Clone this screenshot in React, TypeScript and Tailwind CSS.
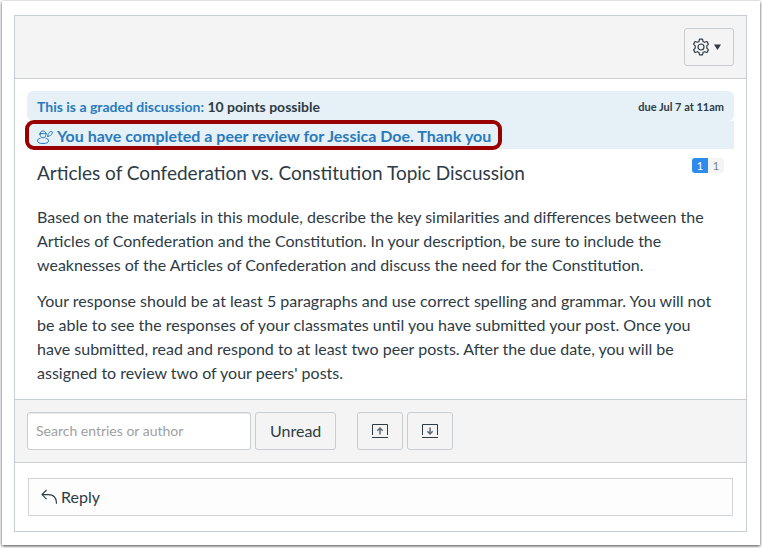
import React from "react";

const GearIcon = () => (
  <svg
    width="18"
    height="18"
    viewBox="0 0 18 18"
    fill="none"
    stroke="#2D3B45"
    strokeWidth="1.2"
    strokeLinejoin="round"
  >
    <path d="M7.500 1.200h3l.5 2.200 1.600.9 2.400-.8 1.400 2.600-1.600 1.700v2.400l1.600 1.700-1.400 2.600-2.400-.8-1.600.9-.5 2.200h-3L7 14.600l-1.600-.9-2.400.8-1.400-2.600 1.600-1.700V7.800L1.600 6.100 3 3.500l2.400.8L7 3.400z" />
    <circle cx="9" cy="9" r="3" />
  </svg>
);

const PeerReviewIcon = () => (
  <svg
    width="16"
    height="16"
    viewBox="0 0 16 16"
    fill="none"
    stroke="#2B7ABC"
    strokeWidth="1"
    strokeLinecap="round"
    strokeLinejoin="round"
  >
    <path d="M3 6.200C3 4.200 4.100 3 6 3s3 1.200 3 3.200-1.200 3.600-3 3.600-3-1.600-3-3.600z" />
    <path d="M2.800 5.600h6.400" />
    <path d="M3.200 10.200C1.500 10.500.5 11.400.5 12.900c0 1.700 2 2.600 5.500 2.600s5.500-.9 5.500-2.600c0-1.500-1-2.400-2.700-2.700" />
    <path d="M10.800 8.600c-.3-1.400.2-2.900 1.300-4 1.100-1.100 2.400-1.500 3-.9s.2 2-.9 3.100c-.9.900-2 1.400-3 1.300z" />
  </svg>
);

const CollapseIcon = () => (
  <svg width="16" height="16" viewBox="0 0 16 16" fill="none" stroke="#2D3B45">
    <path d="M.5 12V1.500h15V12M0 14.500h16" />
    <path d="M8 11.500V5M5.300 7.700L8 5l2.700 2.700" stroke="#5F6A73" strokeWidth="1.500" />
  </svg>
);

const ExpandIcon = () => (
  <svg width="16" height="16" viewBox="0 0 16 16" fill="none" stroke="#2D3B45">
    <path d="M.5 12V1.500h15V12M0 14.500h16" />
    <path d="M8 4.500V11M5.300 8.300L8 11l2.700-2.700" stroke="#5F6A73" strokeWidth="1.500" />
  </svg>
);

const ReplyIcon = () => (
  <svg
    width="16"
    height="16"
    viewBox="0 0 16 16"
    fill="none"
    stroke="#2D3B45"
    strokeWidth="1.1"
  >
    <path d="M5.600 1L1 5.600l4.600 4.600M1 5.600h6.500c4.800 0 8 3.200 8 9.100" />
  </svg>
);

const App = () => {
  return (
    <div className="bg-white pt-px pb-[3px] px-[2px] font-[Lato,'Liberation_Sans',sans-serif] text-[#2D3B45]">
      <div className="bg-white pt-[14px] pb-[13px] pl-3 pr-[13px] shadow-[0_1px_3px_rgba(0,0,0,0.75)]">
        <main className="border border-[#C7CDD1]">
          <header className="flex justify-end bg-[#F4F4F4] border-b border-[#C7CDD1] p-3">
            <button
              type="button"
              aria-label="Manage discussion"
              className="flex items-center gap-1 h-[38px] w-[50px] pl-[7px] border border-[#C7CDD1] rounded-[3px]"
            >
              <GearIcon />
              <svg width="7" height="6" viewBox="0 0 7 6" fill="#2D3B45">
                <path d="M0 .5h7L3.500 6z" />
              </svg>
            </button>
          </header>

          <article className="px-3 pt-3 pb-[14px]">
            <div className="flex items-center justify-between h-[30px] pt-0.5 px-[10px] bg-[#E5F1F7] rounded-md font-bold">
              <p className="text-sm">
                <span className="text-[#2B7ABC]">
                  This is a graded discussion:
                </span>{" "}
                10 points possible
              </p>
              <p className="text-[11px]">due Jul 7 at 11am</p>
            </div>
            <div className="flex h-7 pl-[10px] bg-[#E5F1F7]">
              <p className="relative flex items-center gap-1 pt-0.5 font-bold text-base text-[#2B7ABC]">
                <PeerReviewIcon />
                You have completed a peer review for Jessica Doe. Thank you
                <span className="absolute -inset-y-px -left-3 -right-[11px] border-4 border-[#990000] rounded-[9px]"></span>
              </p>
            </div>
            <div className="flex items-start justify-between px-[10px] pt-2">
              <h1 className="text-[19px] leading-8">
                Articles of Confederation vs. Constitution Topic Discussion
              </h1>
              <div className="flex mt-px text-[11px] leading-[15px] text-center">
                <span className="w-4 bg-[#2D8CEB] text-white rounded-l-[3px]">
                  1
                </span>
                <span className="w-4 bg-[#F4F4F4] text-[#73818C] rounded-[3px]">
                  1
                </span>
              </div>
            </div>
            <div className="flex flex-col gap-3 px-[10px] pt-4 text-base leading-6">
              <p>
                Based on the materials in this module, describe the key
                similarities and differences between the Articles of
                Confederation and the Constitution. In your description, be sure
                to include the weaknesses of the Articles of Confederation and
                discuss the need for the Constitution.
              </p>
              <p>
                Your response should be at least 5 paragraphs and use correct
                spelling and grammar. You will not be able to see the responses
                of your classmates until you have submitted your post. Once you
                have submitted, read and respond to at least two peer posts.
                After the due date, you will be assigned to review two of your
                peers' posts.
              </p>
            </div>
          </article>

          <div className="flex gap-1 bg-[#F4F4F4] border-y border-[#C7CDD1] p-3">
            <input
              type="text"
              aria-label="Search entries or author"
              placeholder="Search entries or author"
              className="h-[38px] w-56 px-2 pb-0.5 text-sm bg-white border border-[#C7CDD1] rounded-[3px] placeholder:text-[#A0A0A0] shadow-[inset_0_1px_1px_rgba(0,0,0,0.08)]"
            />
            <button
              type="button"
              className="h-[38px] px-[14px] text-base border border-[#C7CDD1] rounded-[3px]"
            >
              Unread
            </button>
            <div className="flex gap-1 pl-[17px]">
              <button
                type="button"
                aria-label="Collapse replies"
                className="flex items-center justify-center h-[38px] w-[46px] border border-[#C7CDD1] rounded-[3px]"
              >
                <CollapseIcon />
              </button>
              <button
                type="button"
                aria-label="Expand replies"
                className="flex items-center justify-center h-[38px] w-[46px] border border-[#C7CDD1] rounded-[3px]"
              >
                <ExpandIcon />
              </button>
            </div>
          </div>

          <div className="px-[13px] py-[15px]">
            <button
              type="button"
              className="flex items-center gap-1 w-full h-[38px] px-3 text-base bg-[#FDFDFD] border border-[#D2D5D7]"
            >
              <ReplyIcon />
              Reply
            </button>
          </div>
        </main>
      </div>
    </div>
  );
};

export default App;
